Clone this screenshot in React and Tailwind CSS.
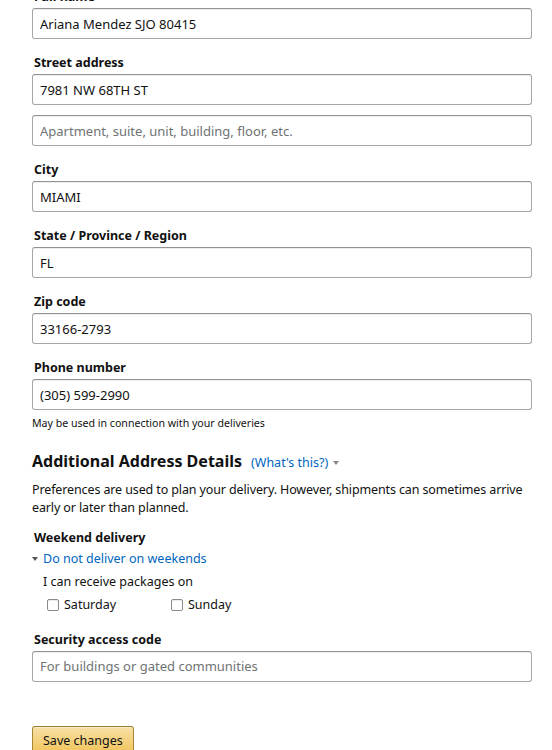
import React from "react";

const inputCls =
  "block w-[500px] h-[31px] px-[7px] rounded-[3px] border border-[#a6a6a6] border-t-[#949494] shadow-[0_1px_0_rgba(0,0,0,0.07)_inset] bg-white text-[13px] text-[#111] placeholder-[#6f7373] outline-none";

const labelCls = "block pl-[2px] pt-[1px] mb-[2px] text-[12.5px] leading-[18px] font-bold text-[#111]";

function Field({ label, value, placeholder }) {
  return (
    <div className="mb-[14px]">
      {label && <label className={labelCls}>{label}</label>}
      <input className={inputCls} defaultValue={value} placeholder={placeholder} />
    </div>
  );
}

function Check({ label }) {
  return (
    <label className="flex items-center gap-[5px] text-[12.5px] text-[#111]">
      <span className="inline-block w-[12px] h-[12px] rounded-[2px] border border-[#8a8a8a] bg-white shadow-[inset_0_1px_1px_rgba(0,0,0,0.08)]" />
      {label}
    </label>
  );
}

export default function App() {
  return (
    <div className="w-[552px] h-[750px] overflow-hidden bg-white font-['Noto_Sans',Arial,sans-serif]">
      <div className="pl-[32px] pr-[20px] -mt-[13px]">
        <Field label="Full name" value="Ariana Mendez SJO 80415" />
        <div className="mb-[14px]">
          <label className={labelCls}>Street address</label>
          <input className={inputCls} defaultValue="7981 NW 68TH ST" />
          <input className={inputCls + " mt-[10px]"} placeholder="Apartment, suite, unit, building, floor, etc." />
        </div>
        <Field label="City" value="MIAMI" />
        <Field label="State / Province / Region" value="FL" />
        <Field label="Zip code" value="33166-2793" />
        <div>
          <label className={labelCls}>Phone number</label>
          <input className={inputCls} defaultValue="(305) 599-2990" />
          <p className="mt-[5px] text-[10.6px] leading-[16px] text-[#111]">May be used in connection with your deliveries</p>
        </div>

        <div className="mt-[18px] flex items-baseline gap-[9px]">
          <h2 className="text-[16px] leading-[24px] font-bold text-[#111]">Additional Address Details</h2>
          <span className="flex items-center gap-[5px] text-[12.5px] text-[#0066c0]">
            (What's this?)
            <span className="w-0 h-0 border-x-[3.5px] border-x-transparent border-t-[4px] border-t-[#888]" />
          </span>
        </div>
        <p className="mt-[8px] text-[12.5px] leading-[18px] tracking-[-0.12px] text-[#111]">
          Preferences are used to plan your delivery. However, shipments can sometimes arrive early or later than planned.
        </p>

        <div className="mt-[12px] pl-[2px] text-[12.5px] leading-[18px] font-bold text-[#111]">Weekend delivery</div>
        <div className="mt-[3px] flex items-center gap-[5px] text-[12.5px] leading-[18px] text-[#0066c0]">
          <span className="w-0 h-0 border-x-[3.5px] border-x-transparent border-t-[4px] border-t-[#555]" />
          Do not deliver on weekends
        </div>
        <div className="pl-[11px]">
          <div className="mt-[5px] text-[12.5px] leading-[18px] text-[#111]">I can receive packages on</div>
          <div className="mt-[5px] flex pl-[4px]">
            <div className="w-[124px]"><Check label="Saturday" /></div>
            <Check label="Sunday" />
          </div>
        </div>

        <div className="mt-[15px]">
          <Field label="Security access code" placeholder="For buildings or gated communities" />
        </div>

        <button className="mt-[30px] h-[31px] px-[10px] rounded-[3px] border border-[#a88734] border-t-[#9c7e31] border-b-[#846a29] bg-gradient-to-b from-[#f7dfa5] to-[#f0c14b] text-[12.5px] text-[#111] shadow-[inset_0_1px_0_rgba(255,255,255,0.4)]">
          Save changes
        </button>
      </div>
    </div>
  );
}
